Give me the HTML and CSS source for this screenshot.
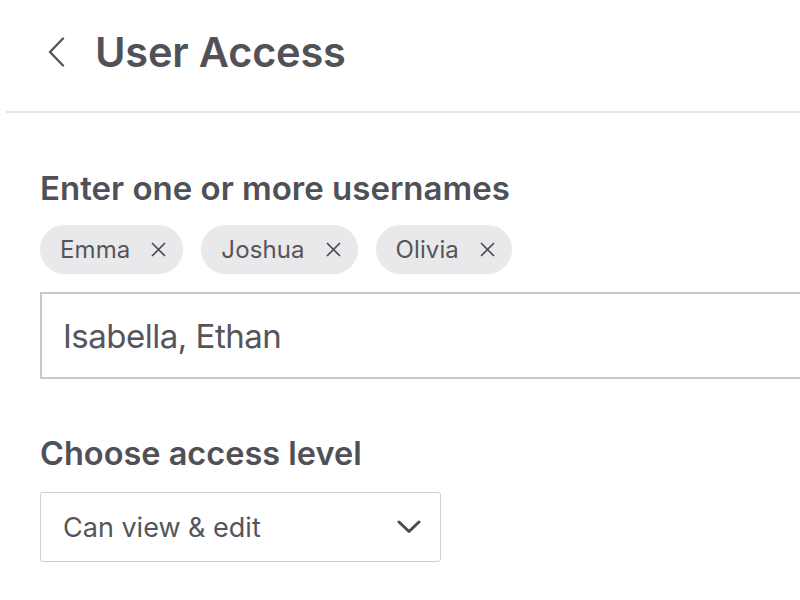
FILE: index.html
```html
<!DOCTYPE html>
<html>
<head>
<meta charset="utf-8">
<link rel="stylesheet" href="styles.css">
</head>
<body>
<header class="topbar">
  <span class="back">
    <svg width="18" height="30" viewBox="0 0 18 30"><path d="M16 1.5 L3 15 L16 28.5" fill="none" stroke="#55555b" stroke-width="2.4" stroke-linecap="round" stroke-linejoin="round"/></svg>
  </span>
  <h1 class="title">User Access</h1>
</header>
<div class="divider"></div>
<main class="content">
  <section class="field">
    <h2 class="label">Enter one or more usernames</h2>
    <div class="chips">
      <span class="chip">Emma <svg class="x" width="15" height="15" viewBox="0 0 15 15"><path d="M1.5 1.5 L13.5 13.5 M13.5 1.5 L1.5 13.5" stroke="#4a4a50" stroke-width="1.7" stroke-linecap="round"/></svg></span>
      <span class="chip">Joshua <svg class="x" width="15" height="15" viewBox="0 0 15 15"><path d="M1.5 1.5 L13.5 13.5 M13.5 1.5 L1.5 13.5" stroke="#4a4a50" stroke-width="1.7" stroke-linecap="round"/></svg></span>
      <span class="chip">Olivia <svg class="x" width="15" height="15" viewBox="0 0 15 15"><path d="M1.5 1.5 L13.5 13.5 M13.5 1.5 L1.5 13.5" stroke="#4a4a50" stroke-width="1.7" stroke-linecap="round"/></svg></span>
    </div>
    <div class="textbox"><span class="typed">Isabella, Ethan</span></div>
  </section>
  <section class="field second">
    <h2 class="label">Choose access level</h2>
    <div class="select">
      <span class="value">Can view &amp; edit</span>
      <svg width="24" height="14" viewBox="0 0 24 14"><path d="M2 2 L12 11.5 L22 2" fill="none" stroke="#4a4a50" stroke-width="3" stroke-linecap="round" stroke-linejoin="round"/></svg>
    </div>
  </section>
</main>
</body>
</html>
```
FILE: styles.css
```css
html, body {
  margin: 0;
  padding: 0;
  background: #ffffff;
  font-family: Inter, "Noto Sans", sans-serif;
  color: #515158;
  overflow: hidden;
}
.topbar {
  display: flex;
  align-items: center;
  height: 104px;
  padding-left: 47px;
}
.back {
  display: flex;
  width: 48px;
}
.title {
  margin: 0;
  font-size: 41.5px;
  font-weight: 600;
  letter-spacing: -0.2px;
  color: #515158;
}
.divider {
  margin-top: 7px;
  margin-left: 6px;
  height: 2px;
  background: #e6e6e8;
}
.content {
  padding: 55px 0 0 40px;
}
.field {
  display: flex;
  flex-direction: column;
}
.label {
  margin: 0;
  font-size: 33px;
  font-weight: 600;
  line-height: 40px;
  color: #505057;
}
.second .label {
  font-size: 32.5px;
}
.chips {
  display: flex;
  gap: 18px;
  margin-top: 17px;
}
.chip {
  display: flex;
  align-items: center;
  gap: 21px;
  height: 49px;
  padding: 0 17px 0 20px;
  border-radius: 25px;
  background: #e9e9eb;
  font-size: 24px;
  letter-spacing: 0.1px;
  color: #55555b;
}
.textbox {
  margin-top: 18px;
  height: 83px;
  border: 2px solid #c9c9cb;
  border-right: none;
  display: flex;
  align-items: center;
  padding-left: 21px;
}
.typed {
  font-size: 33px;
  color: #55555b;
  letter-spacing: -0.5px;
}
.second {
  margin-top: 55px;
}
.select {
  margin-top: 18px;
  width: 401px;
  height: 70px;
  box-sizing: border-box;
  border: 1.5px solid #cfcfd1;
  border-radius: 3px;
  display: flex;
  align-items: center;
  justify-content: space-between;
  padding: 0 19px 0 22px;
}
.value {
  font-size: 27px;
  color: #55555b;
}
```
